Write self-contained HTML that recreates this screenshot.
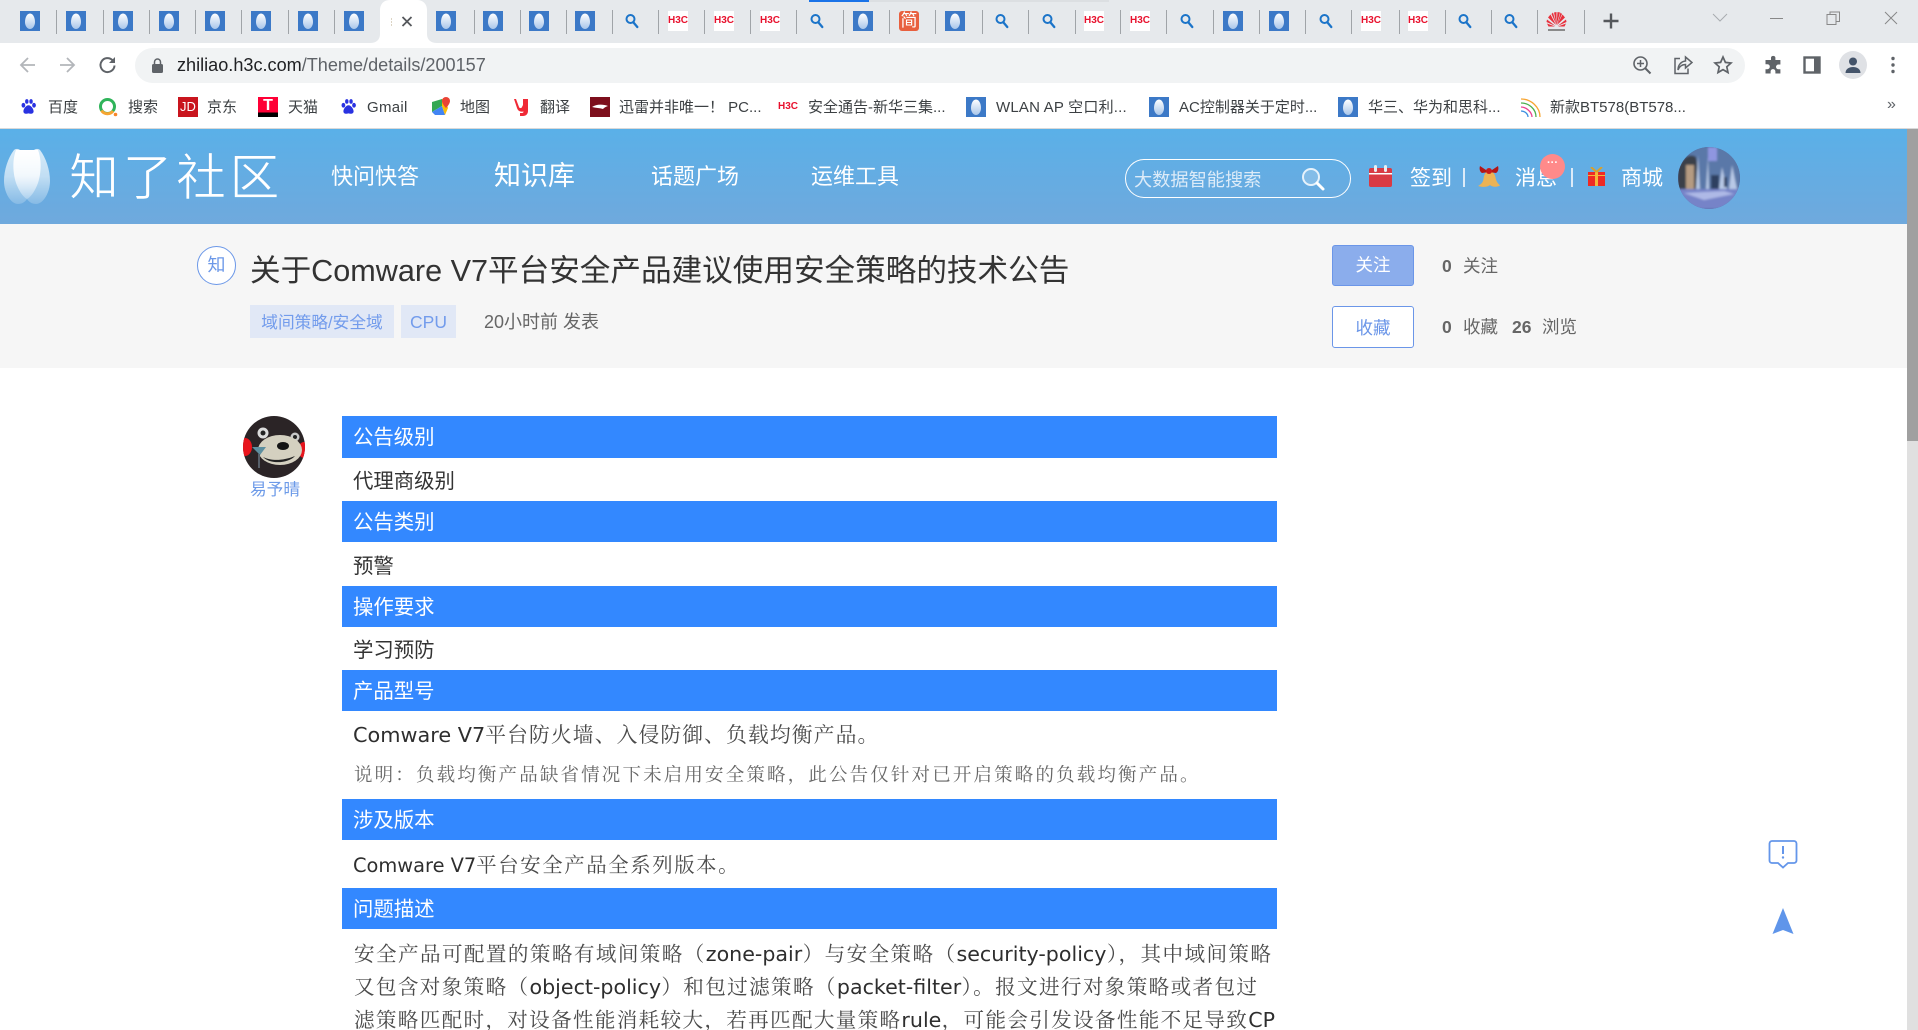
<!DOCTYPE html>
<html lang="zh-CN"><head><meta charset="utf-8"><title>关于Comware V7平台安全产品建议使用安全策略的技术公告</title>
<style>
html,body{margin:0;padding:0;width:1918px;height:1030px;overflow:hidden;background:#fff}
body{position:relative;font-family:"Liberation Sans","Noto Sans CJK SC",sans-serif;color:#333}
.a,.t,svg.i,.h,.sp,.b{position:absolute}
.t{white-space:nowrap;line-height:1}
.sp{width:1px;top:10px;height:24px;background:#a0a4a8}
svg.i{width:20px;height:20px;top:11px}
.h{width:20px;height:20px;top:11px;background:#fff;color:#e8112d;font:bold 10px/20px "Liberation Sans",sans-serif;text-align:center;overflow:hidden;letter-spacing:0}
.bm{top:100px;font-size:15px;color:#3c4043}
.bi{top:97px}
.b{left:342px;width:935px;background:#3388ff;color:#fff;font-size:20.4px;line-height:45px;height:41px;overflow:hidden;text-indent:11px}
.c{font-size:20.4px;color:#333;left:353px}
.s{font-family:"DejaVu Sans","Noto Serif CJK SC",serif;color:#4a4a4a}
.s span{color:#2e2e2e}
.n{color:#fff;font-size:22px;top:166px}
.m{font-size:21px;color:#fff;top:168px}
.g{font-size:17.5px;color:#666}
.j{position:absolute;left:354px;height:33px;line-height:33px;font-size:20.6px;letter-spacing:1px;text-align:justify;text-align-last:justify;white-space:nowrap;overflow:hidden;font-family:"DejaVu Sans","Noto Serif CJK SC",serif;color:#4a4a4a}
.j span{color:#2e2e2e;font-size:20.6px;letter-spacing:0}
</style></head><body>
<svg width="0" height="0" style="position:absolute"><defs>
<linearGradient id="zg" x1="0" y1="0" x2="0" y2="1"><stop offset="0" stop-color="#fff"/><stop offset="1" stop-color="#a9c6ea"/></linearGradient>
<linearGradient id="lg" x1="0" y1="0" x2="0" y2="1"><stop offset="0" stop-color="#fff"/><stop offset=".5" stop-color="#fff" stop-opacity=".8"/><stop offset="1" stop-color="#fff" stop-opacity=".25"/></linearGradient>
<symbol id="zl" viewBox="0 0 20 20"><rect width="20" height="20" fill="#3c79c7"/><path d="M10 2.500C6.800 2.500 5 7 5 11c0 4 2.400 7 5 7s5-3 5-7c0-4-1.800-8.500-5-8.500z" fill="url(#zg)"/></symbol>
<symbol id="sr" viewBox="0 0 20 20"><circle cx="8.500" cy="8" r="4" fill="none" stroke="#1b74c9" stroke-width="2"/><path d="M11.500 11.500l3.800 4.500" stroke="#1b74c9" stroke-width="2.300" stroke-linecap="round"/></symbol>
</defs></svg>

<!-- tab strip -->
<div class="a" style="left:0;top:0;width:1918px;height:43px;background:#e6e9ec"></div>
<div class="a" style="left:809px;top:0;width:60px;height:2px;background:#1a73e8"></div>
<div class="a" style="left:869px;top:0;width:240px;height:2px;background:#dcdfe2"></div>
<svg class="a" style="left:370px;top:0" width="67" height="43"><path d="M0 43c6 0 10-3 10-9V10C10 4 14 0 20 0h27c6 0 10 4 10 10v24c0 6 4 9 10 9z" fill="#fff"/><path d="M32.500 17l9 9M41.500 17l-9 9" stroke="#55585c" stroke-width="1.800"/><path d="M21 19h1M21 22h1M21 25h1" stroke="#b9a98a" stroke-width="1"/></svg>

<svg class="i" style="left:20px"><use href="#zl"/></svg><svg class="i" style="left:66px"><use href="#zl"/></svg><svg class="i" style="left:113px"><use href="#zl"/></svg><svg class="i" style="left:159px"><use href="#zl"/></svg><svg class="i" style="left:205px"><use href="#zl"/></svg><svg class="i" style="left:251px"><use href="#zl"/></svg><svg class="i" style="left:298px"><use href="#zl"/></svg><svg class="i" style="left:344px"><use href="#zl"/></svg>
<svg class="i" style="left:436px"><use href="#zl"/></svg><svg class="i" style="left:483px"><use href="#zl"/></svg><svg class="i" style="left:529px"><use href="#zl"/></svg><svg class="i" style="left:575px"><use href="#zl"/></svg>
<svg class="i" style="left:622px"><use href="#sr"/></svg>
<div class="h" style="left:668px">H3C</div><div class="h" style="left:714px">H3C</div><div class="h" style="left:760px">H3C</div>
<svg class="i" style="left:807px"><use href="#sr"/></svg>
<svg class="i" style="left:853px"><use href="#zl"/></svg>
<div class="a" style="left:899px;top:11px;width:20px;height:20px;border-radius:3px;background:#e8603f;color:#fff;font-size:17px;line-height:20px;text-align:center">简</div>
<svg class="i" style="left:945px"><use href="#zl"/></svg>
<svg class="i" style="left:992px"><use href="#sr"/></svg><svg class="i" style="left:1039px"><use href="#sr"/></svg>
<div class="h" style="left:1084px">H3C</div><div class="h" style="left:1130px">H3C</div>
<svg class="i" style="left:1177px"><use href="#sr"/></svg>
<svg class="i" style="left:1223px"><use href="#zl"/></svg><svg class="i" style="left:1269px"><use href="#zl"/></svg>
<svg class="i" style="left:1316px"><use href="#sr"/></svg>
<div class="h" style="left:1361px">H3C</div><div class="h" style="left:1408px">H3C</div>
<svg class="i" style="left:1455px"><use href="#sr"/></svg><svg class="i" style="left:1501px"><use href="#sr"/></svg>
<svg class="i" style="left:1546px;width:21px;height:21px" viewBox="0 0 21 21"><g fill="#e8303c"><path d="M10 14L4.500 3.500 2 6.500zM10.500 14L7 1.500 5.500 3zM10.500 14V1l-2.500.500zM10.500 14l1-13 2.500.500zM11 14l3.500-12.500L16 3zM11 14l5.500-10.500L19 6.500zM9.500 15L1 8.500.500 11zM11.500 15L20 8.500l.500 2.500zM9 15.500L1 12.500l1.500 3zM12 15.500l8-3-1.500 3z"/></g><rect x="2" y="18" width="17" height="2" fill="#8a8a8a"/></svg>
<div class="sp" style="left:56px"></div><div class="sp" style="left:103px"></div><div class="sp" style="left:149px"></div><div class="sp" style="left:195px"></div><div class="sp" style="left:241px"></div><div class="sp" style="left:288px"></div><div class="sp" style="left:334px"></div><div class="sp" style="left:474px"></div><div class="sp" style="left:520px"></div><div class="sp" style="left:566px"></div><div class="sp" style="left:612px"></div><div class="sp" style="left:658px"></div><div class="sp" style="left:704px"></div><div class="sp" style="left:750px"></div><div class="sp" style="left:796px"></div><div class="sp" style="left:843px"></div><div class="sp" style="left:889px"></div><div class="sp" style="left:935px"></div><div class="sp" style="left:982px"></div><div class="sp" style="left:1028px"></div><div class="sp" style="left:1075px"></div><div class="sp" style="left:1120px"></div><div class="sp" style="left:1166px"></div><div class="sp" style="left:1213px"></div><div class="sp" style="left:1259px"></div><div class="sp" style="left:1305px"></div><div class="sp" style="left:1351px"></div><div class="sp" style="left:1399px"></div><div class="sp" style="left:1445px"></div><div class="sp" style="left:1491px"></div><div class="sp" style="left:1537px"></div><div class="sp" style="left:1584px"></div>
<svg class="a" style="left:1602px;top:12px" width="18" height="18"><path d="M9 1.500v15M1.500 9h15" stroke="#55585c" stroke-width="2.400"/></svg>
<svg class="a" style="left:1711px;top:12px" width="18" height="12"><path d="M2 2l7 7 7-7" fill="none" stroke="#a8acb0" stroke-width="1"/></svg>
<div class="a" style="left:1770px;top:18px;width:13px;height:1px;background:#888"></div>
<svg class="a" style="left:1826px;top:11px" width="15" height="15"><path d="M1 3.500h9v10H1zM4 3.500V1h9.500v9.500H10" fill="none" stroke="#888" stroke-width="1"/></svg>
<svg class="a" style="left:1884px;top:11px" width="14" height="14"><path d="M1 1l12 12M13 1L1 13" stroke="#888" stroke-width="1"/></svg>

<!-- toolbar -->
<div class="a" style="left:135px;top:48px;width:1610px;height:35px;background:#f1f3f4;border-radius:18px"></div>
<svg class="a" style="left:18px;top:55px" width="20" height="20"><path d="M17 10H3.500M10 3l-7 7 7 7" fill="none" stroke="#b3b6ba" stroke-width="1.800"/></svg>
<svg class="a" style="left:57px;top:55px" width="20" height="20"><path d="M3 10h13.500M10 3l7 7-7 7" fill="none" stroke="#b3b6ba" stroke-width="1.800"/></svg>
<svg class="a" style="left:98px;top:55px" width="20" height="20"><path d="M16.500 10.500a7 7 0 1 1-2-5.300" fill="none" stroke="#5f6368" stroke-width="2"/><path d="M17 2v6h-6z" fill="#5f6368"/></svg>
<svg class="a" style="left:151px;top:58px" width="13" height="15"><rect x="1" y="6" width="11" height="9" rx="1.500" fill="#5f6368"/><path d="M3.500 6V4a3 3 0 0 1 6 0v2" fill="none" stroke="#5f6368" stroke-width="1.500"/></svg>
<div class="t" style="left:177px;top:56px;font-size:18.100px;color:#202124">zhiliao.h3c.com<span style="color:#5f6368">/Theme/details/200157</span></div>
<svg class="a" style="left:1632px;top:55px" width="20" height="20"><circle cx="8.500" cy="8.500" r="6.500" fill="none" stroke="#5f6368" stroke-width="1.600"/><path d="M13 13l5.500 5.500" stroke="#5f6368" stroke-width="2"/><path d="M8.500 5v7M5 8.500h7" stroke="#5f6368" stroke-width="1.500"/></svg>
<svg class="a" style="left:1673px;top:55px" width="20" height="20"><path d="M7 3.500H2v15h13v-5" fill="none" stroke="#5f6368" stroke-width="1.500"/><path d="M12.500 2l6.500 5.500-6.500 5.500V9.500C9 9.500 6.500 11 5 15c0-5 3-8.500 7.500-9z" fill="none" stroke="#5f6368" stroke-width="1.500"/></svg>
<svg class="a" style="left:1713px;top:55px" width="20" height="20"><path d="M10 2l2.400 5.400 5.600.600-4.200 3.800 1.200 5.700L10 14.600l-5 2.900 1.200-5.700L2 8l5.600-.600z" fill="none" stroke="#5f6368" stroke-width="1.700"/></svg>
<svg class="a" style="left:1763px;top:55px" width="20" height="20"><path d="M8 2.500a2.300 2.300 0 0 1 4.400 0V5h5v4.500h-2a2.400 2.400 0 0 0 0 4.800h2V18.500h-5v-2a2.400 2.400 0 0 0-4.800 0v2H2.500v-4.300h1.800a2.500 2.500 0 0 0 0-5H2.500V5H8z" fill="#5f6368"/></svg>
<svg class="a" style="left:1803px;top:56px" width="18" height="18"><rect x="1.500" y="1.500" width="15" height="15" fill="none" stroke="#5f6368" stroke-width="2.400"/><rect x="11" y="2" width="5" height="14" fill="#5f6368"/></svg>
<div class="a" style="left:1839px;top:51px;width:28px;height:28px;border-radius:50%;background:#dfe1e5"></div>
<svg class="a" style="left:1844px;top:56px" width="18" height="18"><circle cx="9" cy="5.500" r="4" fill="#44546a"/><path d="M1.500 17c0-4 3.500-6 7.500-6s7.500 2 7.500 6z" fill="#44546a"/></svg>
<svg class="a" style="left:1889px;top:56px" width="8" height="18"><circle cx="4" cy="2.500" r="1.700" fill="#5f6368"/><circle cx="4" cy="9" r="1.700" fill="#5f6368"/><circle cx="4" cy="15.500" r="1.700" fill="#5f6368"/></svg>

<!-- bookmarks -->
<svg class="a bi" style="left:20px" width="17" height="20" viewBox="0 0 20 20"><g fill="#2932e1"><ellipse cx="4" cy="8" rx="2.200" ry="2.800"/><ellipse cx="8" cy="3.500" rx="2" ry="2.700"/><ellipse cx="13" cy="3.500" rx="2" ry="2.700"/><ellipse cx="16.500" cy="8" rx="2.200" ry="2.800"/><path d="M10 8c-3 0-6 4.500-6 7 0 3 3 3.500 6 2.500 3 1 6 .5 6-2.500 0-2.500-3-7-6-7z"/></g></svg>
<div class="t bm" style="left:48px">百度</div>
<svg class="a bi" style="left:98px" width="20" height="20"><circle cx="9.500" cy="9.500" r="7" fill="none" stroke="#2fb45a" stroke-width="3"/><path d="M3.500 13.500A7 7 0 0 0 15 14" fill="none" stroke="#f7a532" stroke-width="3"/><circle cx="17.500" cy="17.500" r="1.800" fill="#f7862a"/></svg>
<div class="t bm" style="left:128px">搜索</div>
<div class="a bi" style="left:178px;width:20px;height:20px;background:#c9151e;color:#fff;font:13px/20px 'Liberation Sans',sans-serif;text-align:center">JD</div>
<div class="t bm" style="left:207px">京东</div>
<div class="a bi" style="left:258px;width:20px;height:20px;background:linear-gradient(#ff0036 78%,#000 78%);color:#fff;font:bold 16px/17px 'Liberation Sans',sans-serif;text-align:center">T</div>
<div class="t bm" style="left:288px">天猫</div>
<svg class="a bi" style="left:340px" width="17" height="20" viewBox="0 0 20 20"><g fill="#2932e1"><ellipse cx="4" cy="8" rx="2.200" ry="2.800"/><ellipse cx="8" cy="3.500" rx="2" ry="2.700"/><ellipse cx="13" cy="3.500" rx="2" ry="2.700"/><ellipse cx="16.500" cy="8" rx="2.200" ry="2.800"/><path d="M10 8c-3 0-6 4.500-6 7 0 3 3 3.500 6 2.500 3 1 6 .5 6-2.500 0-2.500-3-7-6-7z"/></g></svg>
<div class="t bm" style="left:367px;letter-spacing:.3px">Gmail</div>
<svg class="a bi" style="left:431px" width="20" height="20"><path d="M1 5l10-3v7L1 15z" fill="#34a853"/><path d="M1 15l10-6 3 9H4z" fill="#4285f4"/><path d="M11 2h3l3 9-3 7-3-9z" fill="#fbbc04"/><path d="M15 0a4 4 0 0 1 4 4c0 3-4 7-4 7s-4-4-4-7a4 4 0 0 1 4-4z" fill="#ea4335"/></svg>
<div class="t bm" style="left:460px">地图</div>
<svg class="a bi" style="left:513px" width="20" height="20"><path d="M3 2l3 8c.5 1.500 2.500 1.500 3 0l1-2V2h5v12c0 3-2 5-5 5H7v-3h2c1 0 1.500-.5 1.500-1.500C7 15 5 14 4 11L1 2z" fill="#f02a36"/></svg>
<div class="t bm" style="left:540px">翻译</div>
<svg class="a bi" style="left:590px" width="20" height="20"><rect width="20" height="20" fill="#7d0f1c"/><path d="M2 10c4-3 11-3 16-1-3 1-4 2-5 3-3-1-7-1-11-2z" fill="#fff"/></svg>
<div class="t bm" style="left:619px">迅雷并非唯一！ PC...</div>
<div class="a bi" style="left:778px;width:20px;height:20px;color:#e8112d;font:bold 10px/20px 'Liberation Sans',sans-serif;text-align:center">H3C</div>
<div class="t bm" style="left:808px">安全通告-新华三集...</div>
<svg class="a bi" style="left:966px" width="20" height="20"><use href="#zl"/></svg>
<div class="t bm" style="left:996px;letter-spacing:.2px">WLAN AP 空口利...</div>
<svg class="a bi" style="left:1149px" width="20" height="20"><use href="#zl"/></svg>
<div class="t bm" style="left:1179px">AC控制器关于定时...</div>
<svg class="a bi" style="left:1338px" width="20" height="20"><use href="#zl"/></svg>
<div class="t bm" style="left:1368px">华三、华为和思科...</div>
<svg class="a bi" style="left:1521px" width="20" height="20"><path d="M0 2c10 0 19 8 19 18" fill="none" stroke="#f7a532" stroke-width="1.300"/><path d="M0 6c8 0 15 6 15 14" fill="none" stroke="#4caf50" stroke-width="1.300"/><path d="M0 10c5 0 11 5 11 10" fill="none" stroke="#e84393" stroke-width="1.300"/><path d="M0 14c4 0 7 3 7 6" fill="none" stroke="#3b8fe0" stroke-width="1.300"/></svg>
<div class="t bm" style="left:1550px">新款BT578(BT578...</div>
<div class="t" style="left:1887px;top:97px;font-size:16px;color:#5f6368">»</div>
<div class="a" style="left:0;top:128px;width:1918px;height:1px;background:#d9d9d9"></div>

<!-- site header -->
<div class="a" style="left:0;top:129px;width:1907px;height:95px;background:linear-gradient(#5ab0e8,#6fa9dd)"></div>
<svg class="a" style="left:3px;top:147px" width="48" height="59" viewBox="0 0 48 59"><path d="M11 3c2-1.500 4-1.500 6 0h14c2-1.500 4-1.500 6 0 6 8 10 20 10 31 0 12-7 23-14 23-4 0-7-2-9-5-2 3-5 5-9 5C8 57 1 46 1 34 1 23 5 11 11 3z" fill="url(#lg)" opacity=".75"/><path d="M13 3h22c3 8 4 20 0 33-3 8-7 14-11 16-4-2-8-8-11-16-4-13-3-25 0-33z" fill="url(#lg)"/></svg>
<div class="t" style="left:69px;top:153px;font-size:50px;letter-spacing:3.500px;color:#fff;-webkit-text-stroke:.9px #63ace3">知了社区</div>
<div class="t n" style="left:331px">快问快答</div>
<div class="t n" style="left:494px;font-size:27px;top:163px">知识库</div>
<div class="t n" style="left:651px">话题广场</div>
<div class="t n" style="left:811px">运维工具</div>
<div class="a" style="left:1125px;top:159px;width:224px;height:37px;border:1.500px solid #fff;border-radius:20px"></div>
<div class="t" style="left:1134px;top:171px;font-size:18.200px;color:#dcebf8">大数据智能搜索</div>
<svg class="a" style="left:1300px;top:166px" width="26" height="26"><circle cx="11" cy="11" r="8" fill="rgba(255,255,255,.2)" stroke="#e6f2fb" stroke-width="2"/><path d="M17 17l6 6" stroke="#fff" stroke-width="3" stroke-linecap="round"/></svg>
<svg class="a" style="left:1369px;top:164px" width="23" height="23"><rect x="0" y="4" width="23" height="19" rx="2" fill="#d93a44"/><rect x="0" y="9" width="23" height="1.500" fill="#fff"/><rect x="5" y="1" width="3" height="7" rx="1.500" fill="#e9eef2"/><rect x="15" y="1" width="3" height="7" rx="1.500" fill="#e9eef2"/></svg>
<div class="t m" style="left:1410px">签到</div>
<div class="a" style="left:1463px;top:168px;width:2px;height:19px;background:#dcebf8"></div>
<svg class="a" style="left:1477px;top:163px" width="24" height="28"><path d="M12 8c-4 1-5 4-5.500 8S3 22 1 23c5 1.500 10 1 12-1 2 2 6 2.500 10 .500-3-3-4-5-4.500-8S16 8 12 8z" fill="#ecb355"/><path d="M12 9L3 3c-1 3 0 6 2 7zM12 9l9-6c1 3 0 6-2 7z" fill="#b31515"/><circle cx="12" cy="8" r="3" fill="#c71a1a"/></svg>
<div class="t m" style="left:1515px">消息</div>
<div class="a" style="left:1540px;top:154px;width:25px;height:25px;border-radius:50%;background:#ff8a8a;color:#fff;font:bold 11px/19px 'Liberation Sans',sans-serif;text-align:center">···</div>
<div class="a" style="left:1571px;top:168px;width:2px;height:19px;background:#dcebf8"></div>
<svg class="a" style="left:1587px;top:167px" width="19" height="19"><rect x="1" y="5" width="17" height="14" fill="#ee2a24"/><rect x="8" y="5" width="3" height="14" fill="#f4b63a"/><rect x="1" y="8" width="17" height="1" fill="#f4b63a"/><path d="M9.500 5L4 0M9.500 5L15 0" stroke="#d9a02b" stroke-width="2"/></svg>
<div class="t m" style="left:1621px">商城</div>
<svg class="a" style="left:1678px;top:147px" width="62" height="62" viewBox="0 0 62 62"><defs><clipPath id="av"><circle cx="31" cy="31" r="31"/></clipPath><filter id="bl"><feGaussianBlur stdDeviation="1"/></filter></defs><g clip-path="url(#av)"><rect width="62" height="62" fill="#4f6aa3"/><g filter="url(#bl)"><rect x="0" y="0" width="62" height="42" fill="#5a78a8"/><rect x="30" y="0" width="9" height="14" fill="#8f96e0"/><path d="M0 22c4-12 12-16 18-12 2 8 2 20 0 32H0z" fill="#3b3f4a"/><rect x="8" y="18" width="8" height="24" fill="#b59b82"/><path d="M20 8l2 34h-4zM30 10l1 32h-3zM44 20l5 22h-8zM54 18l5 24h-8z" fill="#b8c9e6"/><path d="M33 28h8v14h-8zM46 30h3v10h-3z" fill="#2f3f60"/><path d="M0 42h62v20H0z" fill="#7683c8"/><path d="M6 46l40-2 10 3-30 6z" fill="#aeb9e6"/></g></g></svg>

<!-- title band -->
<div class="a" style="left:0;top:224px;width:1907px;height:144px;background:#f6f6f6"></div>
<div class="a" style="left:197px;top:246px;width:37px;height:37px;border:1px solid #6c98e8;border-radius:50%;background:#fff;color:#6c98e8;font-size:18px;line-height:37px;text-align:center">知</div>
<div class="t" style="left:250px;top:256px;font-size:30.600px;color:#333">关于Comware V7平台安全产品建议使用安全策略的技术公告</div>
<div class="a" style="left:250px;top:305px;width:144px;height:33px;background:#e1e8f6;color:#739cec;font-size:16.700px;line-height:35px;text-align:center">域间策略/安全域</div>
<div class="a" style="left:401px;top:305px;width:55px;height:33px;background:#e1e8f6;color:#739cec;font-size:17.500px;line-height:35px;text-align:center">CPU</div>
<div class="t g" style="left:484px;top:313px;font-size:18px">20小时前 发表</div>
<div class="a" style="left:1332px;top:245px;width:80px;height:39px;background:#8badec;border:1px solid #6b96e8;border-radius:3px;color:#fff;font-size:17.500px;line-height:39px;text-align:center">关注</div>
<div class="t g" style="left:1442px;top:258px"><b>0</b></div>
<div class="t g" style="left:1463px;top:258px">关注</div>
<div class="a" style="left:1332px;top:306px;width:80px;height:40px;background:#fff;border:1px solid #6b96e8;border-radius:3px;color:#6b96e8;font-size:17.500px;line-height:42px;text-align:center">收藏</div>
<div class="t g" style="left:1442px;top:319px"><b>0</b></div>
<div class="t g" style="left:1463px;top:319px">收藏</div>
<div class="t g" style="left:1512px;top:319px"><b>26</b></div>
<div class="t g" style="left:1542px;top:319px">浏览</div>

<!-- author -->
<svg class="a" style="left:243px;top:416px" width="62" height="62" viewBox="0 0 62 62"><defs><clipPath id="ku"><circle cx="31" cy="31" r="31"/></clipPath></defs><g clip-path="url(#ku)"><rect width="62" height="62" fill="#2b2426"/><circle cx="20" cy="17" r="5.500" fill="#dcdcdc"/><circle cx="20" cy="17" r="2.500" fill="#222"/><circle cx="52" cy="21" r="4.500" fill="#c8c8c8"/><circle cx="52" cy="21" r="2" fill="#222"/><ellipse cx="2" cy="31" rx="7" ry="9" fill="#e8141c"/><ellipse cx="61" cy="34" rx="6" ry="8" fill="#e8141c"/><ellipse cx="37" cy="34" rx="22" ry="15" fill="#d4d0c0"/><ellipse cx="40" cy="30" rx="6" ry="4" fill="#151515"/><path d="M20 41c8 4 20 4 32-1-6 7-24 9-32 1z" fill="#222"/><path d="M9 31h14l-6 8z" fill="#5d8fa0"/><rect x="15" y="38" width="2" height="14" fill="#57606a"/></g></svg>
<div class="t" style="left:250px;top:482px;font-size:16.700px;color:#6c9ae8">易予晴</div>

<!-- article -->
<div class="b" style="top:416px;height:42px;line-height:45px">公告级别</div>
<div class="t c" style="top:472px">代理商级别</div>
<div class="b" style="top:501px">公告类别</div>
<div class="t c" style="top:557px">预警</div>
<div class="b" style="top:586px">操作要求</div>
<div class="t c" style="top:641px">学习预防</div>
<div class="b" style="top:670px">产品型号</div>
<div class="t s" style="left:353px;top:725px;font-size:20.800px;letter-spacing:1.100px"><span style="letter-spacing:0">Comware V7</span>平台防火墙、入侵防御、负载均衡产品。</div>
<div class="t s" style="left:354px;top:767px;font-size:18.500px;letter-spacing:2.150px;color:#666">说明：负载均衡产品缺省情况下未启用安全策略，此公告仅针对已开启策略的负载均衡产品。</div>
<div class="b" style="top:799px">涉及版本</div>
<div class="t s" style="left:353px;top:855px;font-size:20.400px;letter-spacing:1.600px"><span style="font-size:19.400px;letter-spacing:0">Comware V7</span>平台安全产品全系列版本。</div>
<div class="b" style="top:888px">问题描述</div>
<div class="j" style="top:938px;width:918px">安全产品可配置的策略有域间策略（<span>zone-pair</span>）与安全策略（<span>security-policy</span>），其中域间策略</div>
<div class="j" style="top:971px;width:904px">又包含对象策略（<span>object-policy</span>）和包过滤策略（<span>packet-filter</span>）。报文进行对象策略或者包过</div>
<div class="j" style="top:1004px;width:921px">滤策略匹配时，对设备性能消耗较大，若再匹配大量策略<span>rule</span>，可能会引发设备性能不足导致<span>CP</span></div>

<!-- floating icons -->
<svg class="a" style="left:1768px;top:839px" width="30" height="30" viewBox="0 0 30 30"><path d="M4 2h22a2.500 2.500 0 0 1 2.500 2.500v17A2.500 2.500 0 0 1 26 24h-6l-5 4.500L10 24H4a2.500 2.500 0 0 1-2.500-2.500v-17A2.500 2.500 0 0 1 4 2z" fill="none" stroke="#6496ea" stroke-width="1.800"/><path d="M15 7v8" stroke="#6496ea" stroke-width="2"/><circle cx="15" cy="18.500" r="1.200" fill="#6496ea"/></svg>
<svg class="a" style="left:1772px;top:908px" width="22" height="26"><path d="M11 0l10.500 26L11 22 .500 26z" fill="#5f95ea"/></svg>

<!-- scrollbar -->
<div class="a" style="left:1907px;top:129px;width:11px;height:901px;background:#e0e0e0"></div>
<div class="a" style="left:1907px;top:129px;width:11px;height:312px;background:#a0a0a0"></div>
</body></html>
